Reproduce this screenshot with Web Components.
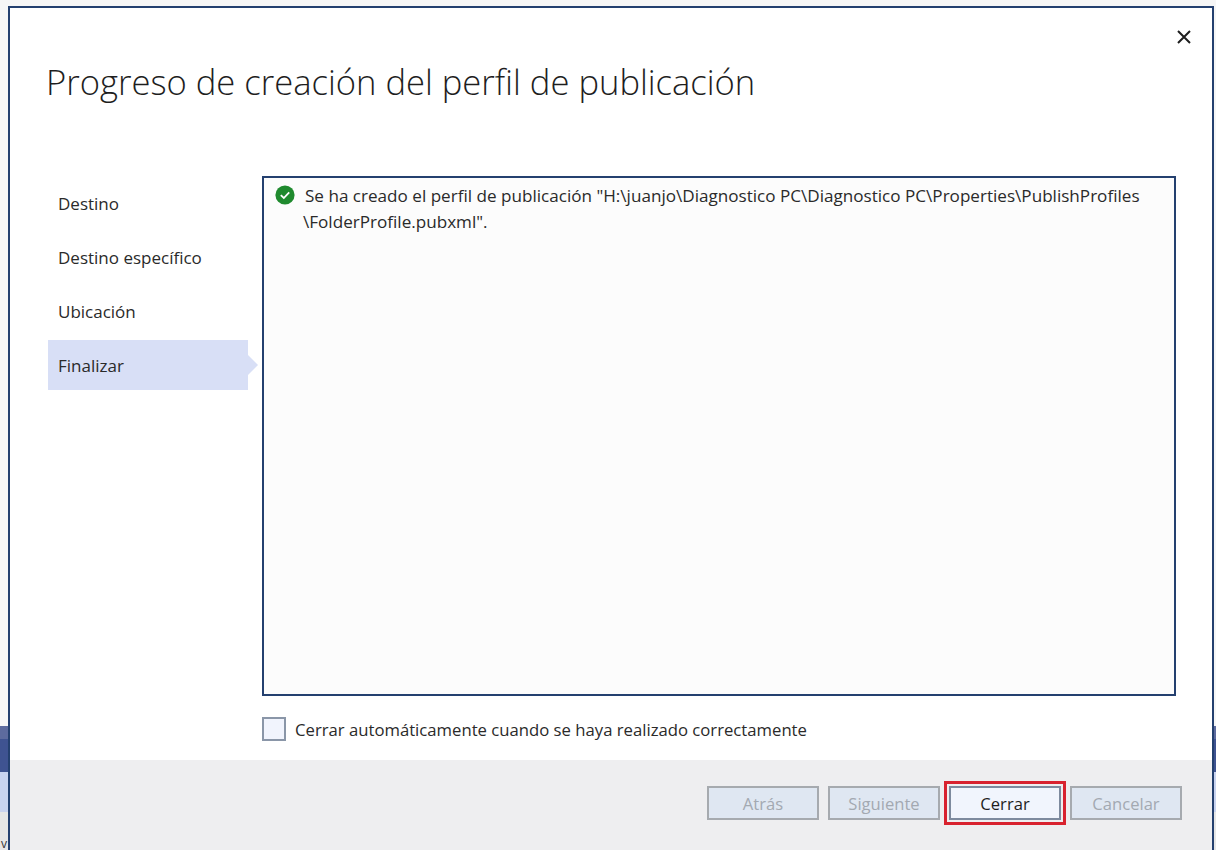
<!DOCTYPE html>
<html lang="es">
<head>
<meta charset="utf-8">
<title>Progreso de creación del perfil de publicación</title>
<style>
  html, body { margin: 0; height: 100%; overflow: hidden; }
  body { font-family: "Open Sans", "Noto Sans", "Liberation Sans", sans-serif; color: #1e1e1e; }
</style>
</head>
<body>
  <ide-backdrop>v</ide-backdrop>
  <publish-dialog>
    <span slot="title">Progreso de creación del perfil de publicación</span>
    <step-item slot="steps">Destino</step-item>
    <step-item slot="steps">Destino específico</step-item>
    <step-item slot="steps">Ubicación</step-item>
    <step-item slot="steps" active>Finalizar</step-item>
    <status-line slot="output">Se ha creado el perfil de publicación "H:\juanjo\Diagnostico PC\Diagnostico PC\Properties\PublishProfiles<br>\FolderProfile.pubxml".</status-line>
    <check-field slot="option">Cerrar automáticamente cuando se haya realizado correctamente</check-field>
    <wizard-button slot="actions" disabled>Atrás</wizard-button>
    <wizard-button slot="actions" disabled>Siguiente</wizard-button>
    <wizard-button slot="actions" marked>Cerrar</wizard-button>
    <wizard-button slot="actions" disabled>Cancelar</wizard-button>
  </publish-dialog>

  <script>
    class IdeBackdrop extends HTMLElement {
      constructor() {
        super();
        this.attachShadow({ mode: 'open' });
        this.shadowRoot.innerHTML = `
          <style>
            :host { display: flex; flex-direction: column; height: 850px; background: #f6f6f6; }
            .top { flex: 1; }
            .a { height: 13px; background: #5d6b9e; }
            .b { height: 33px; background: #3f5391; }
            .c { height: 40px; background: #c9d3ef; }
            .d { height: 38px; box-sizing: border-box; padding-left: 1px; background: #e6e6e6; display: flex; align-items: flex-end; font-size: 12px; line-height: 12px; color: #333; }
          </style>
          <div class="top"></div><div class="a"></div><div class="b"></div><div class="c"></div>
          <div class="d"><slot></slot></div>`;
      }
    }
    customElements.define('ide-backdrop', IdeBackdrop);

    class PublishDialog extends HTMLElement {
      constructor() {
        super();
        this.attachShadow({ mode: 'open' });
        this.shadowRoot.innerHTML = `
          <style>
            :host {
              position: absolute; left: 8px; top: 6px; width: 1202px; height: 842px;
              border: 2px solid #24406f; border-bottom: 0;
              background: #fff; display: flex; flex-direction: column;
            }
            header { height: 168px; box-sizing: border-box; padding: 48px 0 0 36px; font-size: 34.6px; line-height: 52px; font-weight: 300; color: #1e1e1e; position: relative; }
            .close { position: absolute; right: 21px; top: 22px; width: 14px; height: 14px; display: block; }
            main { flex: 1; display: grid; grid-template-columns: 200px 914px; column-gap: 14px; padding-left: 38px; align-content: start; }
            nav { display: flex; flex-direction: column; gap: 4px; padding-top: 2px; }
            .output { height: 520px; box-sizing: border-box; border: 2px solid #24406f; background: #fcfcfc; }
            .option { grid-column: 2; margin-top: 21px; }
            footer { height: 90px; box-sizing: border-box; background: #eeeef0; padding: 26px 30px 0 0; display: flex; justify-content: flex-end; gap: 9px; align-items: flex-start; }
          </style>
          <header>
            <slot name="title"></slot>
            <svg class="close" viewBox="0 0 14 14" fill="none" stroke="#1e1e1e" stroke-width="2"><path d="M1 1 L13 13 M13 1 L1 13"/></svg>
          </header>
          <main>
            <nav><slot name="steps"></slot></nav>
            <div class="output"><slot name="output"></slot></div>
            <div class="option"><slot name="option"></slot></div>
          </main>
          <footer><slot name="actions"></slot></footer>`;
      }
    }
    customElements.define('publish-dialog', PublishDialog);

    class StepItem extends HTMLElement {
      constructor() {
        super();
        this.attachShadow({ mode: 'open' });
        this.shadowRoot.innerHTML = `
          <style>
            :host { display: flex; align-items: center; height: 50px; box-sizing: border-box; padding-left: 10px; font-size: 17px; position: relative; color: #2a2a2a; }
            :host([active]) { background: #d8dff6; }
            :host([active])::after {
              content: ""; position: absolute; left: 100%; top: 15px;
              border-left: 10px solid #d8dff6; border-top: 10px solid transparent; border-bottom: 10px solid transparent;
            }
          </style>
          <slot></slot>`;
      }
    }
    customElements.define('step-item', StepItem);

    class StatusLine extends HTMLElement {
      constructor() {
        super();
        this.attachShadow({ mode: 'open' });
        this.shadowRoot.innerHTML = `
          <style>
            :host { display: flex; align-items: flex-start; gap: 8px; padding: 5px 0 0 11px; font-size: 17.1px; line-height: 26px; color: #2a2a2a; white-space: nowrap; }
            svg { width: 20px; height: 20px; flex: none; margin-top: 2px; }
            span { text-indent: 2px; }
          </style>
          <svg viewBox="0 0 20 20"><circle cx="10" cy="10" r="9.6" fill="#1f8a2e"/><path d="M5.8 10.2 L8.8 13 L14.2 7.4" fill="none" stroke="#fff" stroke-width="1.8"/></svg>
          <span><slot></slot></span>`;
      }
    }
    customElements.define('status-line', StatusLine);

    class CheckField extends HTMLElement {
      constructor() {
        super();
        this.attachShadow({ mode: 'open' });
        this.shadowRoot.innerHTML = `
          <style>
            :host { display: flex; align-items: center; gap: 9px; height: 24px; font-size: 16.7px; color: #2a2a2a; }
            .box { width: 24px; height: 24px; box-sizing: border-box; border: 2px solid #8a96a8; background: #f1f4fd; }
          </style>
          <div class="box"></div><span><slot></slot></span>`;
      }
    }
    customElements.define('check-field', CheckField);

    class WizardButton extends HTMLElement {
      constructor() {
        super();
        this.attachShadow({ mode: 'open' });
        this.shadowRoot.innerHTML = `
          <style>
            :host {
              display: flex; align-items: center; justify-content: center;
              width: 112px; height: 34px; box-sizing: border-box;
              border: 2px solid #7d8a9e; background: #f1f5fd; font-size: 16.6px; color: #1e1e1e;
            }
            :host([disabled]) { border-color: #a6aaaf; background: #dfe7f2; color: #a3a9b1; }
            :host([marked]) { outline: 3px solid #d8222f; outline-offset: 2px; }
          </style>
          <slot></slot>`;
      }
    }
    customElements.define('wizard-button', WizardButton);
  </script>
</body>
</html>
